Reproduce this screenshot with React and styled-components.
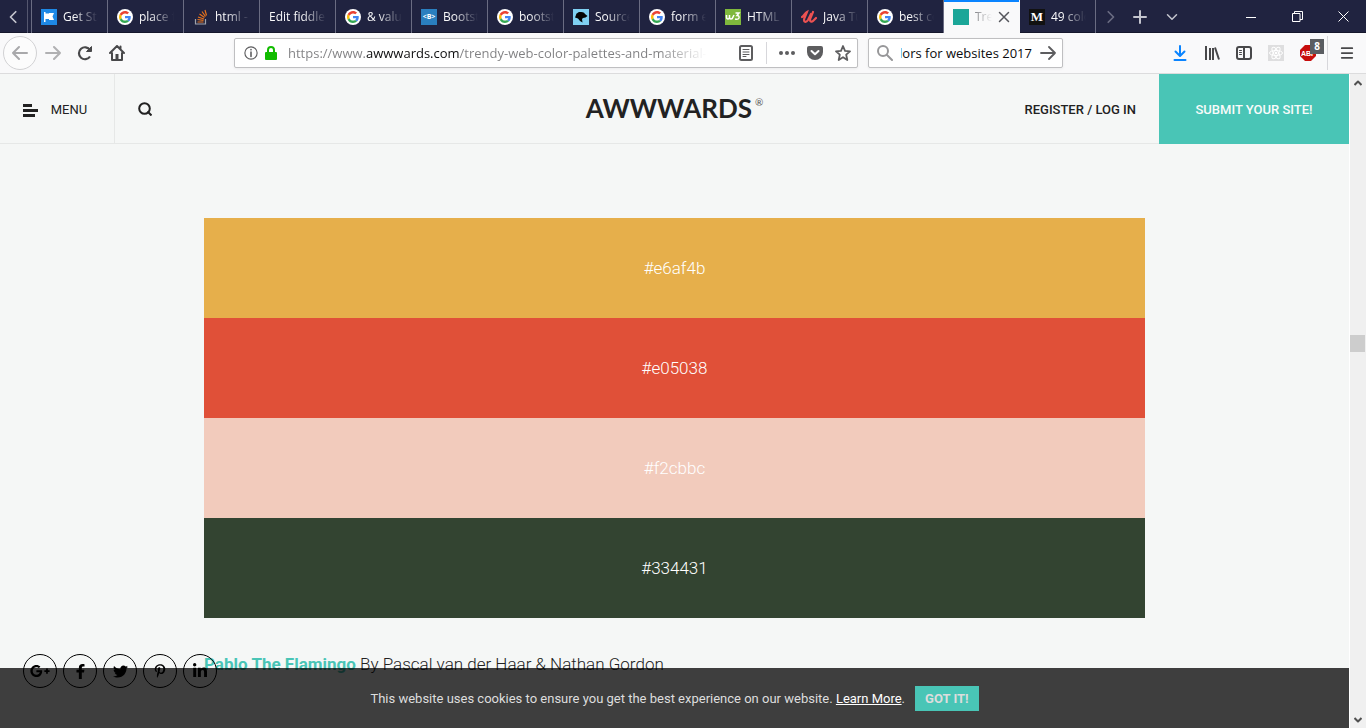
import React, { useEffect, useRef } from "react";
import styled, { createGlobalStyle, css } from "styled-components";
import { FaFacebookF, FaGooglePlusG, FaLinkedinIn, FaPinterestP, FaTwitter } from "react-icons/fa";

const teal = "#49c5b6";
const chromeFont = `"Open Sans", "Noto Sans", sans-serif`;
const siteFont = `Roboto, "Liberation Sans", sans-serif`;

const GlobalStyle = createGlobalStyle`
  * { box-sizing: border-box; }
  html, body { margin: 0; height: 100%; }
  #root { height: 100%; }
  body { overflow: hidden; background: #f5f7f6; font-family: ${siteFont}; }
  button, input { font: inherit; margin: 0; padding: 0; border: 0; background: none; color: inherit; }
  button { cursor: pointer; display: inline-flex; align-items: center; justify-content: center; }
  a { color: inherit; text-decoration: none; }
  svg { display: block; flex: none; }
`;

const Window = styled.div`
  display: flex;
  flex-direction: column;
  height: 100vh;
`;

/* ---------- tab strip ---------- */

const TabStrip = styled.div`
  display: flex;
  flex: none;
  height: 33px;
  background: #202340;
  box-shadow: inset 0 -1px #15172c;
  color: #f9f9fa;
  font: 12px/16px ${chromeFont};
`;

const ScrollBack = styled.button`
  width: 28px;
  border-right: 1px solid #55576f;
  color: #c4c5ce;
`;

const Tabs = styled.div`
  display: flex;
  min-width: 0;
  margin-left: 3px;
  border-left: 1px solid #6a6c82;
`;

const Tab = styled.div`
  display: flex;
  align-items: center;
  width: 76px;
  min-width: 0;
  gap: 6px;
  padding: 0 9px;
  border-right: 1px solid #6a6c82;
  ${(p) => p.$active && css`
    background: #f9f9fa;
    color: #55565c;
    border-right-color: #f9f9fa;
    box-shadow: inset 0 2px #0a84ff;
  `}
`;

const TabLabel = styled.span`
  flex: 1;
  min-width: 0;
  overflow: hidden;
  white-space: nowrap;
  mask-image: linear-gradient(to left, transparent, black 24px);
`;

const Favicon = styled.span`
  display: flex;
  align-items: center;
  justify-content: center;
  flex: none;
  width: 16px;
  height: 16px;
  overflow: hidden;
  border-radius: ${(p) => (p.$round ? "8px" : "0")};
  background: ${(p) => p.$bg || "transparent"};
  color: #fff;
  font: bold ${(p) => p.$size || 8}px/16px ${(p) => p.$family || chromeFont};
`;

const StripButton = styled.button`
  flex: none;
  width: ${(p) => p.$width || 32}px;
  color: ${(p) => (p.$dim ? "#6a6c82" : "#c4c5ce")};
`;

const WindowControls = styled.div`
  display: flex;
  margin-left: auto;
`;

/* ---------- navigation bar ---------- */

const NavBar = styled.div`
  display: flex;
  align-items: center;
  flex: none;
  height: 41px;
  padding: 0 3px;
  background: #f9f9fa;
  border-bottom: 1px solid #dcdcdd;
  font: 13px/20px ${chromeFont};
`;

const BackButton = styled.button`
  flex: none;
  width: 34px;
  height: 34px;
  border: 1px solid #d2d2d4;
  border-radius: 50%;
  background: #fcfcfc;
  color: #a9a9ab;
`;

const ToolButton = styled.button`
  position: relative;
  flex: none;
  width: 32px;
  height: 32px;
  color: ${(p) => p.$color || "#48484a"};
`;

const Spring = styled.div`
  flex: 0 1 101px;
`;

const Field = styled.div`
  display: flex;
  align-items: center;
  min-width: 0;
  height: 30px;
  border: 1px solid #bfbfc1;
  border-radius: 2px;
  background: #fff;
  box-shadow: 0 1px 3px rgba(0, 0, 0, 0.06);
  color: #5d5d5f;
`;

const UrlField = styled(Field)`
  flex: 1;
  gap: 7px;
  padding: 0 2px 0 9px;
`;

const SearchField = styled(Field)`
  flex: 0 0 195px;
  margin-left: 10px;
  gap: 8px;
  padding: 0 6px 0 8px;
`;

const UrlInput = styled.input`
  flex: 1;
  min-width: 0;
  margin-left: 4px;
  outline: none;
  color: transparent;
  background: linear-gradient(to right, #808082 78px, #0c0c0d 78px 171px, #808082 171px);
  background-clip: text;
  -webkit-background-clip: text;
  mask-image: linear-gradient(to left, transparent, black 48px);
`;

const SearchInput = styled.input`
  flex: 1;
  min-width: 0;
  outline: none;
  color: #0c0c0d;
`;

const UrlActions = styled.div`
  display: flex;
  align-items: center;
  gap: 4px;
  margin-left: 20px;
`;

const FieldButton = styled.button`
  width: 24px;
  height: 24px;
`;

const Divider = styled.span`
  flex: none;
  width: 1px;
  height: ${(p) => p.$height}px;
  margin: 0 ${(p) => p.$margin}px;
  background: #d7d7db;
`;

const Badge = styled.span`
  position: absolute;
  top: 2px;
  right: 0;
  width: 14px;
  height: 15px;
  background: #5a5d61;
  color: #fff;
  font: bold 10px/15px ${chromeFont};
  text-align: center;
`;

/* ---------- web page ---------- */

const Viewport = styled.div`
  display: flex;
  flex: 1;
  min-height: 0;
`;

const Page = styled.div`
  position: relative;
  flex: 1;
  min-width: 0;
  overflow: hidden;
  background: #f5f7f6;
  color: #222;
`;

const SiteHeader = styled.header`
  display: grid;
  grid-template-columns: 1fr auto 1fr;
  height: 70px;
  border-bottom: 1px solid #e6e8e7;
  font-size: 13px;
  line-height: 20px;
`;

const HeaderSide = styled.div`
  display: flex;
  justify-content: ${(p) => (p.$end ? "flex-end" : "flex-start")};
  align-items: stretch;
`;

const MenuButton = styled.button`
  gap: 13px;
  width: 115px;
  padding: 2px 4px 0 0;
  border-right: 1px solid #e6e8e7;
`;

const SearchButton = styled.button`
  width: 60px;
`;

const Logo = styled.a`
  display: flex;
  align-items: center;
  padding-bottom: 3px;
  font: bold 26px/32px Lato, sans-serif;
`;

const Registered = styled.span`
  align-self: flex-start;
  margin: 22px 0 0 3px;
  font: 10px/12px Lato, sans-serif;
  color: #555;
`;

const Account = styled.a`
  align-self: center;
  padding-top: 2px;
  margin-right: 23px;
  font-weight: 500;
`;

const Submit = styled.a`
  display: flex;
  align-items: center;
  justify-content: center;
  width: 190px;
  height: 70px;
  padding-top: 2px;
  background: ${teal};
  color: #f8fbfa;
  font-weight: 500;
`;

const Article = styled.main`
  width: 70%;
  max-width: 941px;
  margin: 0 auto;
  padding-top: 74px;
`;

const Swatch = styled.div`
  display: flex;
  align-items: center;
  justify-content: center;
  height: 100px;
  background: ${(p) => p.$color};
  color: #fff;
  font-size: 17px;
  font-weight: 300;
`;

const Caption = styled.p`
  margin: 34px 0 0;
  font-size: 17px;
  line-height: 24px;
  font-weight: 300;
  a { color: ${teal}; font-weight: 700; }
`;

const CookieBar = styled.div`
  position: absolute;
  left: 0;
  right: 0;
  bottom: 0;
  display: flex;
  align-items: center;
  justify-content: center;
  gap: 10px;
  height: 60px;
  padding-top: 1px;
  background: rgba(0, 0, 0, 0.75);
  color: #ddd;
  font-size: 13px;
  line-height: 20px;
  a { color: #fff; text-decoration: underline; }
`;

const Accept = styled.button`
  height: 25px;
  padding: 0 10px;
  background: ${teal};
  font-weight: 700;
`;

const Share = styled.nav`
  position: absolute;
  left: 23px;
  bottom: 40px;
  display: flex;
  gap: 6px;
`;

const ShareLink = styled.a`
  display: flex;
  align-items: center;
  justify-content: center;
  width: 34px;
  height: 34px;
  border: 1px solid #000;
  border-radius: 50%;
  color: #000;
`;

const ScrollBar = styled.div`
  display: flex;
  flex-direction: column;
  flex: none;
  width: 17px;
  border-left: 1px solid #fff;
  background: #f0f0f0;
  color: #505050;
`;

const ScrollArrow = styled.button`
  height: 17px;
`;

const Track = styled.div`
  flex: ${(p) => p.$share};
`;

const Thumb = styled.div`
  height: 17px;
  margin-right: 1px;
  background: #cdcdcd;
`;

/* ---------- drawings ---------- */

function Stroke({ size = 16, w = 2, d, children, cap = "round" }) {
  return (
    <svg width={size} height={size} viewBox="0 0 16 16" fill="none" stroke="currentColor" strokeWidth={w} strokeLinecap={cap} strokeLinejoin="round" aria-hidden="true">
      {d && <path d={d} />}
      {children}
    </svg>
  );
}

const GoogleIcon = () => (
  <Favicon $bg="#fff" $round>
    <svg width="12" height="12" viewBox="0 0 48 48">
      <path fill="#EA4335" d="M24 9.500c3.540 0 6.710 1.220 9.210 3.600l6.850-6.850C35.900 2.380 30.470 0 24 0 14.620 0 6.510 5.380 2.560 13.220l7.980 6.190C12.430 13.720 17.740 9.500 24 9.500z" />
      <path fill="#4285F4" d="M46.980 24.550c0-1.570-.15-3.090-.38-4.550H24v9.020h12.940c-.58 2.960-2.260 5.480-4.780 7.180l7.730 6c4.510-4.180 7.090-10.360 7.090-17.650z" />
      <path fill="#FBBC05" d="M10.530 28.590c-.48-1.450-.76-2.990-.76-4.590s.27-3.140.76-4.590l-7.980-6.190C.92 16.460 0 20.120 0 24c0 3.880.92 7.540 2.560 10.780l7.970-6.190z" />
      <path fill="#34A853" d="M24 48c6.480 0 11.930-2.130 15.890-5.810l-7.730-6c-2.150 1.450-4.920 2.300-8.160 2.300-6.260 0-11.570-4.220-13.470-9.910l-7.980 6.190C6.510 42.620 14.620 48 24 48z" />
    </svg>
  </Favicon>
);

const FlagIcon = () => (
  <Favicon $bg="#1e88e5">
    <svg width="16" height="16" viewBox="0 0 16 16" fill="#fff"><path d="M3 3h1.500v10H3zM4 4.500h4v-.5h5L11.500 7.500 13 11H8v-1H4z" /></svg>
  </Favicon>
);

const StackIcon = () => (
  <svg width="16" height="16" viewBox="0 0 16 16" fill="none">
    <path d="M2.500 10v5h10v-5" stroke="#a0a3ab" strokeWidth="1.200" />
    <path d="M4.500 13h6M4.500 10.500l6 .8M5 8l6 2M6.500 5l5 3.500M9 2.500l3.500 5M12 1l1.500 5.500" stroke="#e8731c" strokeWidth="1.200" />
  </svg>
);

const BirdIcon = () => (
  <Favicon $bg="#7fd0f2">
    <svg width="16" height="16" viewBox="0 0 16 16"><path d="M3 6c0-2 2-2 3-3 3 0 5 0 6 2l2.500 2-2 1.500L10 9l-1 1 .5 3.500L7 12 5 9.500 2 8.500z" fill="#050505" /></svg>
  </Favicon>
);

const W3Icon = () => (
  <Favicon $bg="#7fb83d">
    <svg width="16" height="16" viewBox="0 0 16 16" fill="none" stroke="#fff" strokeWidth="1.500">
      <path d="M1.500 6v2q0 2 1.500 2t1.500-2V6v2q0 2 1.500 2t2-2l1-2M10.500 4h3.500l-2 2.500q2.500 0 2 2.500-1 2-4 1" />
    </svg>
  </Favicon>
);

const UdemyIcon = () => (
  <svg width="16" height="16" viewBox="0 0 16 16" fill="none" stroke="#ec5252" strokeLinecap="round">
    <path d="M1 8c2-1 3-4 5-5-1 3-3 6-3 8s2 3 4 0l3-6" strokeWidth="2.200" />
    <path d="M12 3c-1 3-3 6-3 8s2 2 3 1l3-3" strokeWidth="2.200" />
  </svg>
);

const CloseIcon = () => <Stroke size={12} w={2} d="M2 2l12 12M14 2L2 14" />;

const PocketIcon = () => (
  <svg width="18" height="16" viewBox="0 0 18 16">
    <path fill="#5d5d5f" d="M3 1h12a2 2 0 0 1 2 2v4a8 8 0 0 1-16 0V3a2 2 0 0 1 2-2z" />
    <path d="M5.500 6L9 9.300 12.500 6" fill="none" stroke="#fff" strokeWidth="2" strokeLinecap="round" strokeLinejoin="round" />
  </svg>
);

const LibraryIcon = () => (
  <svg width="16" height="16" viewBox="0 0 16 16" fill="none" stroke="currentColor" strokeWidth="2">
    <path d="M2 1v14M6 3v12M9 3v12M11 2.500l4 12" />
  </svg>
);

const SidebarIcon = () => (
  <Stroke>
    <rect x="1" y="2" width="14" height="12" rx="2" />
    <path d="M8 2v12" />
    <path d="M3.500 5.500h2M3.500 7.500h2M3.500 9.500h2" strokeWidth="1" />
  </Stroke>
);

const ReactIcon = () => (
  <svg width="16" height="16" viewBox="0 0 16 16" fill="none" stroke="#fff">
    <rect width="16" height="16" fill="#dededf" stroke="none" />
    {[0, 60, 120].map((a) => <ellipse key={a} cx="8" cy="8" rx="6.500" ry="2.500" transform={`rotate(${a} 8 8)`} />)}
    <circle cx="8" cy="8" r="1.300" fill="#fff" stroke="none" />
  </svg>
);

const AdblockIcon = () => (
  <svg width="16" height="16" viewBox="0 0 16 16">
    <path fill="#c70d0c" d="M5 0h6l5 5v6l-5 5H5l-5-5V5z" />
    <text x="1" y="11" fontSize="7" fontWeight="700" fontFamily="Liberation Sans, sans-serif" fill="#fff">ABP</text>
  </svg>
);

const google = <GoogleIcon />;

const tabs = [
  { icon: <FlagIcon />, label: "Get Sta" },
  { icon: google, label: "place f" },
  { icon: <StackIcon />, label: "html -" },
  { label: "Edit fiddle" },
  { icon: google, label: "& valu" },
  { icon: <Favicon $bg="#2a7fbf" $size={7}>&lt;B&gt;</Favicon>, label: "Bootst" },
  { icon: google, label: "bootst" },
  { icon: <BirdIcon />, label: "Source" },
  { icon: google, label: "form e" },
  { icon: <W3Icon />, label: "HTML" },
  { icon: <UdemyIcon />, label: "Java Tu" },
  { icon: google, label: "best co" },
  { icon: <Favicon $bg="#1ba698" />, label: "Tre", active: true },
  { icon: <Favicon $bg="#111" $size={13} $family={`"Liberation Serif", serif`}>M</Favicon>, label: "49 colo" },
];

const swatches = ["#e6af4b", "#e05038", "#f2cbbc", "#334431"];

const networks = [
  ["Google Plus", FaGooglePlusG, 20],
  ["Facebook", FaFacebookF, 15],
  ["Twitter", FaTwitter, 15],
  ["Pinterest", FaPinterestP, 14],
  ["LinkedIn", FaLinkedinIn, 16],
];

function BrowserTabs() {
  return (
    <TabStrip>
      <ScrollBack aria-label="Scroll tabs back"><Stroke size={14} w={2} d="M10 2L4 8l6 6" /></ScrollBack>
      <Tabs>
        {tabs.map((tab) => (
          <Tab key={tab.label} $active={tab.active}>
            {tab.icon}
            <TabLabel>{tab.label}</TabLabel>
            {tab.active && <button aria-label="Close tab"><CloseIcon /></button>}
          </Tab>
        ))}
      </Tabs>
      <StripButton $width={28} $dim aria-label="Scroll tabs forward"><Stroke size={14} w={2} d="M6 2l6 6-6 6" /></StripButton>
      <StripButton aria-label="New tab"><Stroke w={2} d="M8 2v12M2 8h12" /></StripButton>
      <StripButton aria-label="List all tabs"><Stroke size={12} w={2} d="M2 5l6 6 6-6" /></StripButton>
      <WindowControls>
        <StripButton $width={46} aria-label="Minimize"><svg width="10" height="10"><path d="M0 5.500h10" stroke="#fff" /></svg></StripButton>
        <StripButton $width={46} aria-label="Restore">
          <svg width="11" height="11" fill="none" stroke="#fff"><path d="M.5 2.500h7.500v8H.5zM2.500 2.500v-2h8v8H8" /></svg>
        </StripButton>
        <StripButton $width={46} aria-label="Close"><svg width="11" height="11"><path d="M.5.5l10 10M10.500.5l-10 10" stroke="#fff" /></svg></StripButton>
      </WindowControls>
    </TabStrip>
  );
}

function BrowserNav() {
  const search = useRef(null);
  useEffect(() => {
    search.current.scrollLeft = search.current.scrollWidth;
  }, []);
  return (
    <NavBar>
      <BackButton aria-label="Back"><Stroke d="M15 8H1M7 2L1 8l6 6" /></BackButton>
      <ToolButton aria-label="Forward" $color="#b0b0b2"><Stroke d="M1 8h14M9 2l6 6-6 6" /></ToolButton>
      <ToolButton aria-label="Reload">
        <Stroke cap="butt"><path d="M13 11.500A6 6 0 1 1 13 5" strokeWidth="2.200" /><path d="M14.500 1.500v5h-5z" fill="currentColor" strokeWidth="1" /></Stroke>
      </ToolButton>
      <ToolButton aria-label="Home">
        <Stroke><path d="M1 8l7-7 7 7M3 8v7h10V8M11.500 1.500v2" /><path d="M8 9v6" strokeWidth="3" strokeLinecap="butt" /></Stroke>
      </ToolButton>
      <Spring />
      <UrlField>
        <Stroke size={14} w={1.3}><circle cx="8" cy="8" r="7" /><path d="M8 7v5M8 4v.4" strokeWidth="1.800" /></Stroke>
        <svg width="12" height="14" viewBox="0 0 12 14"><path d="M3 7V4a3 3 0 0 1 6 0v3" fill="none" stroke="#12bc00" strokeWidth="2" /><rect y="6" width="12" height="8" rx="1" fill="#12bc00" /></svg>
        <UrlInput aria-label="Address" defaultValue="https://www.awwwards.com/trendy-web-color-palettes-and-material-design" />
        <UrlActions>
          <FieldButton aria-label="Reader view">
            <Stroke><rect x="2" y="1" width="12" height="14" rx="1.500" /><path d="M5 4.500h6M5 7h6M5 9.500h6M5 11.500h3" strokeWidth="1" /></Stroke>
          </FieldButton>
          <Divider $height={22} $margin={4} />
          <FieldButton aria-label="Page actions">
            <svg width="16" height="16" fill="currentColor"><circle cx="2" cy="8" r="2" /><circle cx="8" cy="8" r="2" /><circle cx="14" cy="8" r="2" /></svg>
          </FieldButton>
          <FieldButton aria-label="Save to Pocket"><PocketIcon /></FieldButton>
          <FieldButton aria-label="Bookmark"><Stroke w={1.8} d="M8 1l2 4.800 5 .5-3.800 3.400L12.300 15 8 12.200 3.700 15l1.100-5.300L1 6.300l5-.5z" /></FieldButton>
        </UrlActions>
      </UrlField>
      <SearchField>
        <Stroke w={2}><g stroke="#979799"><circle cx="6" cy="6" r="5" /><path d="M10 10l5 5" /></g></Stroke>
        <SearchInput ref={search} aria-label="Search" defaultValue="colors for websites 2017" />
        <button aria-label="Go"><Stroke w={1.8} d="M1 8h14M9 2l6 6-6 6" /></button>
      </SearchField>
      <Spring />
      <ToolButton aria-label="Downloads" $color="#0a84ff"><Stroke d="M8 1v9M3.500 6.500L8 11l4.500-4.500M2.500 15h11" /></ToolButton>
      <ToolButton aria-label="Library"><LibraryIcon /></ToolButton>
      <ToolButton aria-label="Sidebars"><SidebarIcon /></ToolButton>
      <ToolButton aria-label="React tools"><ReactIcon /></ToolButton>
      <ToolButton aria-label="Adblock Plus"><AdblockIcon /><Badge>8</Badge></ToolButton>
      <Divider $height={34} $margin={3} />
      <ToolButton aria-label="Open menu"><Stroke size={14} d="M2 2.500h12M2 8h12M2 13.500h12" /></ToolButton>
    </NavBar>
  );
}

export default function App() {
  return (
    <Window>
      <GlobalStyle />
      <BrowserTabs />
      <BrowserNav />
      <Viewport>
        <Page>
          <SiteHeader>
            <HeaderSide>
              <MenuButton>
                <svg width="15" height="13" fill="#222"><path d="M0 0h9v3H0zM0 5h15v3H0zM0 10h12v3H0z" /></svg>
                MENU
              </MenuButton>
              <SearchButton aria-label="Search site">
                <svg width="14" height="14" viewBox="0 0 14 14" fill="none" stroke="#222" strokeWidth="2"><circle cx="6.500" cy="6.500" r="5.300" /><path d="M9.500 9.500l4 4" /></svg>
              </SearchButton>
            </HeaderSide>
            <Logo href="#">AWWWARDS<Registered>®</Registered></Logo>
            <HeaderSide $end>
              <Account href="#">REGISTER / LOG IN</Account>
              <Submit href="#">SUBMIT YOUR SITE!</Submit>
            </HeaderSide>
          </SiteHeader>
          <Article>
            {swatches.map((color) => <Swatch key={color} $color={color}>{color}</Swatch>)}
            <Caption><a href="#">Pablo The Flamingo</a> By Pascal van der Haar &amp; Nathan Gordon</Caption>
          </Article>
          <CookieBar>
            <span>This website uses cookies to ensure you get the best experience on our website. <a href="#">Learn More</a>.</span>
            <Accept>GOT IT!</Accept>
          </CookieBar>
          <Share aria-label="Share">
            {networks.map(([name, Icon, size]) => (
              <ShareLink key={name} href="#" aria-label={name}><Icon size={size} /></ShareLink>
            ))}
          </Share>
        </Page>
        <ScrollBar>
          <ScrollArrow aria-label="Scroll up"><Stroke size={8} w={4} cap="butt" d="M1 12l7-7 7 7" /></ScrollArrow>
          <Track $share={244} />
          <Thumb />
          <Track $share={359} />
          <ScrollArrow aria-label="Scroll down"><Stroke size={8} w={4} cap="butt" d="M1 4l7 7 7-7" /></ScrollArrow>
        </ScrollBar>
      </Viewport>
    </Window>
  );
}
